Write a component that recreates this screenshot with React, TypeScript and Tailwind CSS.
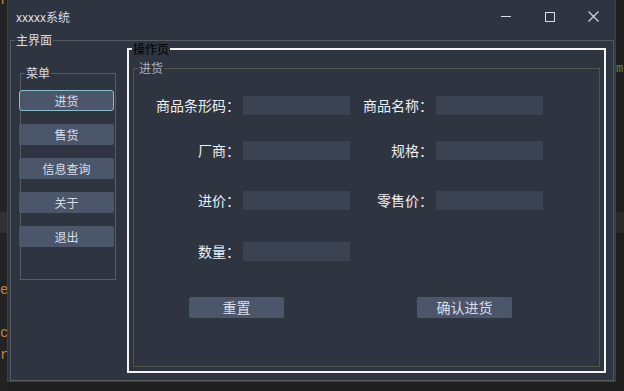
import React from "react";

const font = "font-['Noto_Sans_CJK_SC','Noto_Sans',sans-serif]";

type BoxProps = {
  title: string;
  className: string;
  titleClass: string;
  children?: React.ReactNode;
};

// Qt-like group box: border with the title sitting on the top line
const GroupBox = ({ title, className, titleClass, children }: BoxProps) => (
  <div className={`relative shrink-0 ${className}`}>
    <span className={`absolute -top-[9px] h-[16px] bg-[#2e3440] px-[1px] text-[12px] leading-[16px] ${titleClass}`}>
      {title}
    </span>
    {children}
  </div>
);

const menu = ["进货", "售货", "信息查询", "关于", "退出"];

const Field = ({ label, width }: { label: string; width: string }) => (
  <>
    <span className={`${width} shrink-0 text-right text-[14px] leading-[19px] text-[#eceff4]`}>{label}</span>
    <div className="ml-[3px] h-[19px] w-[107px] shrink-0 bg-[#3b4252]" />
  </>
);

export default function App() {
  return (
    <div className={`flex h-[391px] w-[624px] overflow-hidden bg-[#1f1f1f] ${font}`}>
      {/* editor behind the window, left edge */}
      <div className="flex w-[7px] shrink-0 flex-col overflow-hidden bg-[#232323] font-['Liberation_Mono',monospace] text-[14px] leading-[14px] text-[#c8843c]">
        <div className="h-[7px] overflow-hidden">
          <div className="-mt-[7px]">r</div>
        </div>
        <div className="h-[205px]" />
        <div className="h-[21px] bg-[#313131]" />
        <div className="h-[50px]" />
        <div className="h-[14px]">e</div>
        <div className="h-[29px]" />
        <div className="h-[14px]">c</div>
        <div className="h-[8px]" />
        <div className="h-[14px]">r</div>
      </div>

      {/* window */}
      <div className="flex h-[382px] w-[609px] shrink-0 flex-col border-x border-b border-[#3a404c] bg-[#2e3440]">
        <div className="flex h-[40px] shrink-0 items-start">
          <span className="ml-[8px] mt-[9px] text-[12px] leading-[16px] text-[#d8dee9]">xxxxx系统</span>
          <div className="ml-auto flex h-[33px] items-center">
            <div className="flex w-[44px] justify-center">
              <div className="h-[1px] w-[10px] bg-[#d8dee9]" />
            </div>
            <div className="flex w-[44px] justify-center">
              <div className="h-[10px] w-[10px] border border-[#d8dee9]" />
            </div>
            <div className="flex w-[43px] justify-center">
              <svg width="11" height="11" viewBox="0 0 11 11" stroke="#d8dee9" strokeWidth="1.1">
                <path d="M0.5 0.5 L10.5 10.5 M10.5 0.5 L0.5 10.5" />
              </svg>
            </div>
          </div>
        </div>

        <GroupBox
          title="主界面"
          className="ml-[2px] h-[341px] w-[604px] border border-[#565a61]"
          titleClass="left-[4px] text-[#d8dee9]"
        >
          <div className="flex items-start">
            <GroupBox
              title="菜单"
              className="ml-[9px] mt-[32px] h-[207px] w-[96px] border border-[#5a5d63]"
              titleClass="left-[4px] text-[#d8dee9]"
            >
              <div className="-ml-[2px] mt-[16px] flex flex-col gap-[13px]">
                {menu.map((m, i) => (
                  <div
                    key={m}
                    className={`flex h-[21px] w-[95px] items-center justify-center bg-[#4c566a] text-[12px] text-[#d8dee9] ${
                      i === 0 ? "rounded-[3px] border border-[#88c0d0]" : "rounded-[2px]"
                    }`}
                  >
                    {m}
                  </div>
                ))}
              </div>
            </GroupBox>

            <GroupBox
              title="操作页"
              className="ml-[11px] mt-[7px] h-[325px] w-[479px] border-2 border-[#f4f4f4]"
              titleClass="left-[3px] text-[#000000]"
            >
              <GroupBox
                title="进货"
                className="ml-[4px] mt-[18px] h-[299px] w-[467px] border border-[#51544f]"
                titleClass="left-[4px] text-[#aab2c0]"
              >
                <div className="flex flex-col pt-[27px]">
                  <div className="flex h-[19px] items-center">
                    <Field label="商品条形码：" width="w-[106px]" />
                    <Field label="商品名称：" width="w-[83px]" />
                  </div>
                  <div className="mt-[26px] flex h-[19px] items-center">
                    <Field label="厂商：" width="w-[106px]" />
                    <Field label="规格：" width="w-[83px]" />
                  </div>
                  <div className="mt-[31px] flex h-[19px] items-center">
                    <Field label="进价：" width="w-[106px]" />
                    <Field label="零售价：" width="w-[83px]" />
                  </div>
                  <div className="mt-[32px] flex h-[19px] items-center">
                    <Field label="数量：" width="w-[106px]" />
                  </div>
                  <div className="mt-[36px] flex">
                    <div className="ml-[55px] flex h-[21px] w-[95px] items-center justify-center rounded-[2px] bg-[#4c566a] text-[14px] text-[#d8dee9]">
                      重置
                    </div>
                    <div className="ml-[133px] flex h-[21px] w-[95px] items-center justify-center rounded-[2px] bg-[#4c566a] text-[14px] text-[#d8dee9]">
                      确认进货
                    </div>
                  </div>
                </div>
              </GroupBox>
            </GroupBox>
          </div>
        </GroupBox>
      </div>

      {/* editor behind the window, right edge */}
      <div className="flex w-[8px] shrink-0 flex-col overflow-hidden bg-[#1e1e1e] font-['Liberation_Mono',monospace] text-[12px] leading-[12px] text-[#5f8a45]">
        <div className="h-[63px]" />
        <div className="h-[12px]">m</div>
        <div className="h-[137px]" />
        <div className="h-[21px] bg-[#2a2a2a]" />
      </div>
    </div>
  );
}
